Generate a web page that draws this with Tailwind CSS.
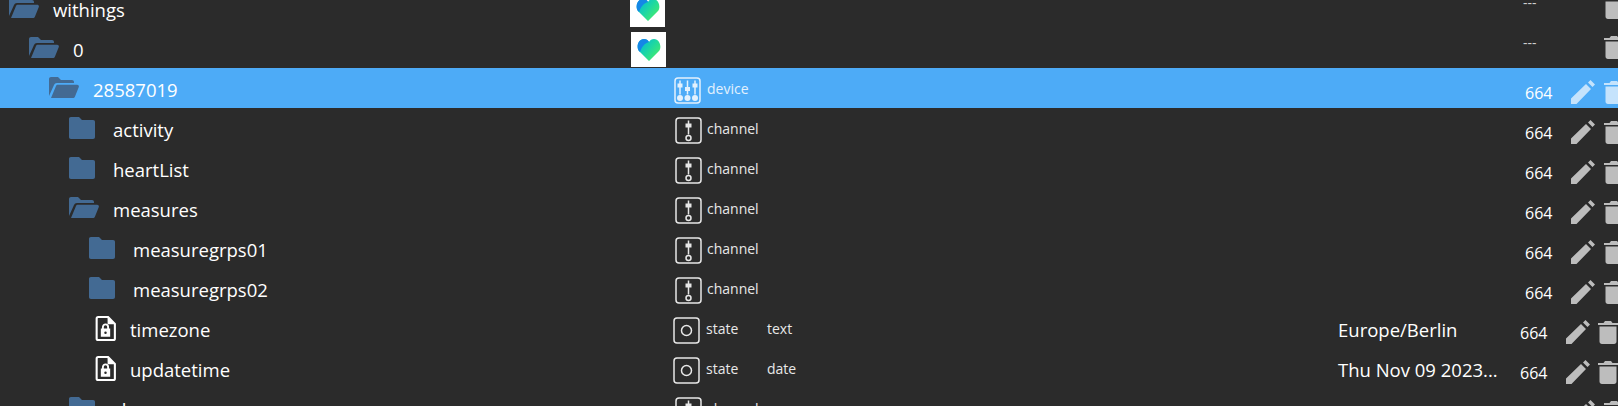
<!DOCTYPE html>
<html lang="en">
<head>
<meta charset="UTF-8">
<title>Objects</title>
<script src="https://cdn.jsdelivr.net/npm/@tailwindcss/browser@4"></script>
</head>
<body class="bg-[#2b2b2b] h-[406px] overflow-hidden text-white font-['Open_Sans','Noto_Sans',sans-serif]">
<svg class="absolute w-0 h-0">
  <defs>
    <linearGradient id="heartGrad" x1="0" y1="0.1" x2="1" y2="0.9">
      <stop offset="0" stop-color="#00b4e0"/><stop offset="0.5" stop-color="#1fd8a0"/><stop offset="1" stop-color="#4ff060"/>
    </linearGradient>
  </defs>
  <symbol id="heart" viewBox="0 0 24 24">
    <path fill="url(#heartGrad)" d="M12 23 2 13C-1 9.500 1 1 7 1c2.200 0 4 1 5 3 1-2 2.800-3 5-3 6 0 8 8.500 5 12z"/>
    <path fill="#1487e6" d="M7 1C1 1-1 9 2 13l1 1c2-6 5-9 9-10-1-2-2.800-3-5-3z"/>
  </symbol>
  <symbol id="folderOpen" viewBox="0 0 32 24">
    <path fill="#436a93" d="M1 20V3c0-1.100.9-2 2-2h7l3 3h11c1.100 0 2 .9 2 2v1H9C7.500 7 6.500 7.800 6 9zM3 22 8 10c.3-.8 1-1.200 2-1.200h19c1.500 0 2.300 1 1.800 2.300L27 20.500c-.4 1-1.200 1.500-2.200 1.500z"/>
  </symbol>
  <symbol id="folder" viewBox="0 0 28 24">
    <path fill="#436a93" d="M3 1h8l3 3h11c1.300 0 2 .8 2 2v15c0 1.200-.7 2-2 2H3c-1.300 0-2-.8-2-2V3c0-1.200.7-2 2-2z"/>
  </symbol>
  <symbol id="fileLock" viewBox="0 0 20 24">
    <path fill="none" stroke="currentColor" stroke-width="2" d="M3 1h9.500L19 7.500V21.500c0 .8-.6 1.500-1.500 1.500H3c-.9 0-1.500-.7-1.500-1.500V2.500C1.500 1.700 2.100 1 3 1z"/>
    <path fill="currentColor" d="M12 1v7h7zM5.500 12h9v8h-9z"/>
    <path fill="none" stroke="currentColor" stroke-width="1.800" d="M7.500 12.500V10.500a2.500 2.500 0 0 1 5 0v2"/>
    <circle cx="10" cy="16" r="1.200" fill="#2b2b2b"/>
  </symbol>
  <symbol id="device" viewBox="0 0 27 27">
    <rect x="1" y="1" width="25" height="25" rx="3" fill="none" stroke="currentColor" stroke-width="1.500"/>
    <path fill="none" stroke="currentColor" stroke-width="1.500" d="M6 3.500v14M13.500 3.500v14M21 3.500v14"/>
    <path fill="currentColor" d="M3.500 6.500h5v4h-5zM11 10h5v4h-5zM18.500 6.500h5v4h-5z"/>
    <circle cx="6" cy="21" r="3"  fill="currentColor"/><circle cx="13.500" cy="21" r="3" fill="currentColor"/><circle cx="21" cy="21" r="3" fill="currentColor"/>
  </symbol>
  <symbol id="channel" viewBox="0 0 27 27">
    <rect x="1" y="1" width="25" height="25" rx="3" fill="none" stroke="currentColor" stroke-width="1.500"/>
    <path fill="none" stroke="currentColor" stroke-width="1.500" d="M13.500 3.500v14"/>
    <path fill="currentColor" d="M10.500 6.500h6v4h-6z"/>
    <circle cx="13.500" cy="21" r="2.500" fill="none" stroke="currentColor" stroke-width="1.500"/>
  </symbol>
  <symbol id="state" viewBox="0 0 27 27">
    <rect x="1" y="1" width="25" height="25" rx="3" fill="none" stroke="currentColor" stroke-width="1.500"/>
    <circle cx="13.500" cy="13.500" r="5" fill="none" stroke="currentColor" stroke-width="1.500"/>
  </symbol>
  <symbol id="pencil" viewBox="0 0 24 24">
    <path fill="currentColor" d="M0 24V18.500L15 4 20 9 5.500 24zM17 2.500 19.500 0 24 4.500 21.500 7z"/>
  </symbol>
  <symbol id="trash" viewBox="0 0 20 24">
    <path fill="currentColor" d="M1.500 6.500h17v15c0 1.400-1 2.500-2.500 2.500H4c-1.500 0-2.500-1.100-2.500-2.500zM0 3h5.500L7 1h6l1.500 2H20V5H0z"/>
  </symbol>
</svg>

<div class="-mt-3 text-[18.5px]">
  <!-- withings -->
  <div class="grid grid-cols-[630px_35px_858px_81px_24px] items-center h-10">
    <div class="flex items-center pl-2"><svg class="w-[32px] h-[24px] shrink-0"><use href="#folderOpen"/></svg><span class="ml-[13px] mt-1">withings</span></div>
    <div class="w-[35px] h-[35px] mt-[3px] bg-white flex items-center justify-center"><svg class="w-6 h-6"><use href="#heart"/></svg></div>
    <span></span>
    <span class="mb-3 text-[14px] text-[#cfcfcf]">---</span>
    <svg class="w-5 h-6 mb-[3px] text-[#bdbdbd]"><use href="#trash"/></svg>
  </div>
  <!-- 0 -->
  <div class="grid grid-cols-[631px_35px_857px_81px_24px] items-center h-10">
    <div class="flex items-center pl-7"><svg class="w-[32px] h-[24px] shrink-0"><use href="#folderOpen"/></svg><span class="ml-[13px] mt-1">0</span></div>
    <div class="w-[35px] h-[35px] mt-[3px] bg-white flex items-center justify-center"><svg class="w-6 h-6"><use href="#heart"/></svg></div>
    <span></span>
    <span class="mb-3 text-[14px] text-[#cfcfcf]">---</span>
    <svg class="w-5 h-6 mb-[3px] text-[#bdbdbd]"><use href="#trash"/></svg>
  </div>

  <!-- 28587019 -->
  <div class="grid grid-cols-[674px_33px_1fr_46px_33px_14px] items-center h-10 bg-[#4dabf7]">
    <div class="flex items-center pl-12"><svg class="w-[32px] h-[24px] shrink-0"><use href="#folderOpen"/></svg><span class="ml-[13px] mt-1">28587019</span></div>
    <svg class="w-[27px] h-[27px] mt-1 text-[#e3f1fd]"><use href="#device"/></svg>
    <span class="text-[14px] text-[#e3f1fd]">device</span>
    <span class="mt-[10px] text-[16px]">664</span>
    <svg class="w-6 h-6 mt-[7px] text-[#c5e3fc]"><use href="#pencil"/></svg>
    <svg class="w-5 h-6 mt-[7px] text-[#c5e3fc]"><use href="#trash"/></svg>
  </div>

  <!-- channels -->
  <div class="grid grid-cols-[675px_32px_1fr_46px_33px_14px] items-center h-10">
    <div class="flex items-center pl-[68px]"><svg class="w-[28px] h-[24px] shrink-0"><use href="#folder"/></svg><span class="ml-[17px] mt-1">activity</span></div>
    <svg class="w-[27px] h-[27px] mt-1 text-[#e8e8e8]"><use href="#channel"/></svg>
    <span class="text-[14px] text-[#e8e8e8]">channel</span>
    <span class="mt-[10px] text-[16px]">664</span>
    <svg class="w-6 h-6 mt-[7px] text-[#bdbdbd]"><use href="#pencil"/></svg>
    <svg class="w-5 h-6 mt-[7px] text-[#bdbdbd]"><use href="#trash"/></svg>
  </div>
  <div class="grid grid-cols-[675px_32px_1fr_46px_33px_14px] items-center h-10">
    <div class="flex items-center pl-[68px]"><svg class="w-[28px] h-[24px] shrink-0"><use href="#folder"/></svg><span class="ml-[17px] mt-1">heartList</span></div>
    <svg class="w-[27px] h-[27px] mt-1 text-[#e8e8e8]"><use href="#channel"/></svg>
    <span class="text-[14px] text-[#e8e8e8]">channel</span>
    <span class="mt-[10px] text-[16px]">664</span>
    <svg class="w-6 h-6 mt-[7px] text-[#bdbdbd]"><use href="#pencil"/></svg>
    <svg class="w-5 h-6 mt-[7px] text-[#bdbdbd]"><use href="#trash"/></svg>
  </div>
  <div class="grid grid-cols-[675px_32px_1fr_46px_33px_14px] items-center h-10">
    <div class="flex items-center pl-[68px]"><svg class="w-[32px] h-[24px] shrink-0"><use href="#folderOpen"/></svg><span class="ml-[13px] mt-1">measures</span></div>
    <svg class="w-[27px] h-[27px] mt-1 text-[#e8e8e8]"><use href="#channel"/></svg>
    <span class="text-[14px] text-[#e8e8e8]">channel</span>
    <span class="mt-[10px] text-[16px]">664</span>
    <svg class="w-6 h-6 mt-[7px] text-[#bdbdbd]"><use href="#pencil"/></svg>
    <svg class="w-5 h-6 mt-[7px] text-[#bdbdbd]"><use href="#trash"/></svg>
  </div>
  <div class="grid grid-cols-[675px_32px_1fr_46px_33px_14px] items-center h-10">
    <div class="flex items-center pl-[88px]"><svg class="w-[28px] h-[24px] shrink-0"><use href="#folder"/></svg><span class="ml-[17px] mt-1">measuregrps01</span></div>
    <svg class="w-[27px] h-[27px] mt-1 text-[#e8e8e8]"><use href="#channel"/></svg>
    <span class="text-[14px] text-[#e8e8e8]">channel</span>
    <span class="mt-[10px] text-[16px]">664</span>
    <svg class="w-6 h-6 mt-[7px] text-[#bdbdbd]"><use href="#pencil"/></svg>
    <svg class="w-5 h-6 mt-[7px] text-[#bdbdbd]"><use href="#trash"/></svg>
  </div>
  <div class="grid grid-cols-[675px_32px_1fr_46px_33px_14px] items-center h-10">
    <div class="flex items-center pl-[88px]"><svg class="w-[28px] h-[24px] shrink-0"><use href="#folder"/></svg><span class="ml-[17px] mt-1">measuregrps02</span></div>
    <svg class="w-[27px] h-[27px] mt-1 text-[#e8e8e8]"><use href="#channel"/></svg>
    <span class="text-[14px] text-[#e8e8e8]">channel</span>
    <span class="mt-[10px] text-[16px]">664</span>
    <svg class="w-6 h-6 mt-[7px] text-[#bdbdbd]"><use href="#pencil"/></svg>
    <svg class="w-5 h-6 mt-[7px] text-[#bdbdbd]"><use href="#trash"/></svg>
  </div>

  <!-- states -->
  <div class="grid grid-cols-[673px_33px_61px_571px_182px_46px_32px_20px] items-center h-10">
    <div class="flex items-center pl-[95px]"><svg class="w-[21px] h-[25px] shrink-0"><use href="#fileLock"/></svg><span class="ml-[14px] mt-1">timezone</span></div>
    <svg class="w-[27px] h-[27px] mt-1 text-[#e8e8e8]"><use href="#state"/></svg>
    <span class="text-[14px] text-[#e8e8e8]">state</span>
    <span class="text-[14px] text-[#e8e8e8]">text</span>
    <span class="mt-1 whitespace-nowrap">Europe/Berlin</span>
    <span class="mt-[10px] text-[16px]">664</span>
    <svg class="w-6 h-6 mt-[7px] text-[#bdbdbd]"><use href="#pencil"/></svg>
    <svg class="w-5 h-6 mt-[7px] text-[#bdbdbd]"><use href="#trash"/></svg>
  </div>
  <div class="grid grid-cols-[673px_33px_61px_571px_182px_46px_32px_20px] items-center h-10">
    <div class="flex items-center pl-[95px]"><svg class="w-[21px] h-[25px] shrink-0"><use href="#fileLock"/></svg><span class="ml-[14px] mt-1">updatetime</span></div>
    <svg class="w-[27px] h-[27px] mt-1 text-[#e8e8e8]"><use href="#state"/></svg>
    <span class="text-[14px] text-[#e8e8e8]">state</span>
    <span class="text-[14px] text-[#e8e8e8]">date</span>
    <span class="mt-1 whitespace-nowrap">Thu Nov 09 2023...</span>
    <span class="mt-[10px] text-[16px]">664</span>
    <svg class="w-6 h-6 mt-[7px] text-[#bdbdbd]"><use href="#pencil"/></svg>
    <svg class="w-5 h-6 mt-[7px] text-[#bdbdbd]"><use href="#trash"/></svg>
  </div>

  <!-- cut-off row -->
  <div class="grid grid-cols-[675px_32px_1fr_46px_33px_14px] items-center h-10">
    <div class="flex items-center pl-[68px]"><svg class="w-[28px] h-[24px] shrink-0"><use href="#folder"/></svg><span class="ml-[17px] mt-1">sleep</span></div>
    <svg class="w-[27px] h-[27px] mt-1 text-[#e8e8e8]"><use href="#channel"/></svg>
    <span class="text-[14px] text-[#e8e8e8]">channel</span>
    <span class="mt-[10px] text-[16px]">664</span>
    <svg class="w-6 h-6 mt-[7px] text-[#bdbdbd]"><use href="#pencil"/></svg>
    <svg class="w-5 h-6 mt-[7px] text-[#bdbdbd]"><use href="#trash"/></svg>
  </div>
</div>
</body>
</html>
